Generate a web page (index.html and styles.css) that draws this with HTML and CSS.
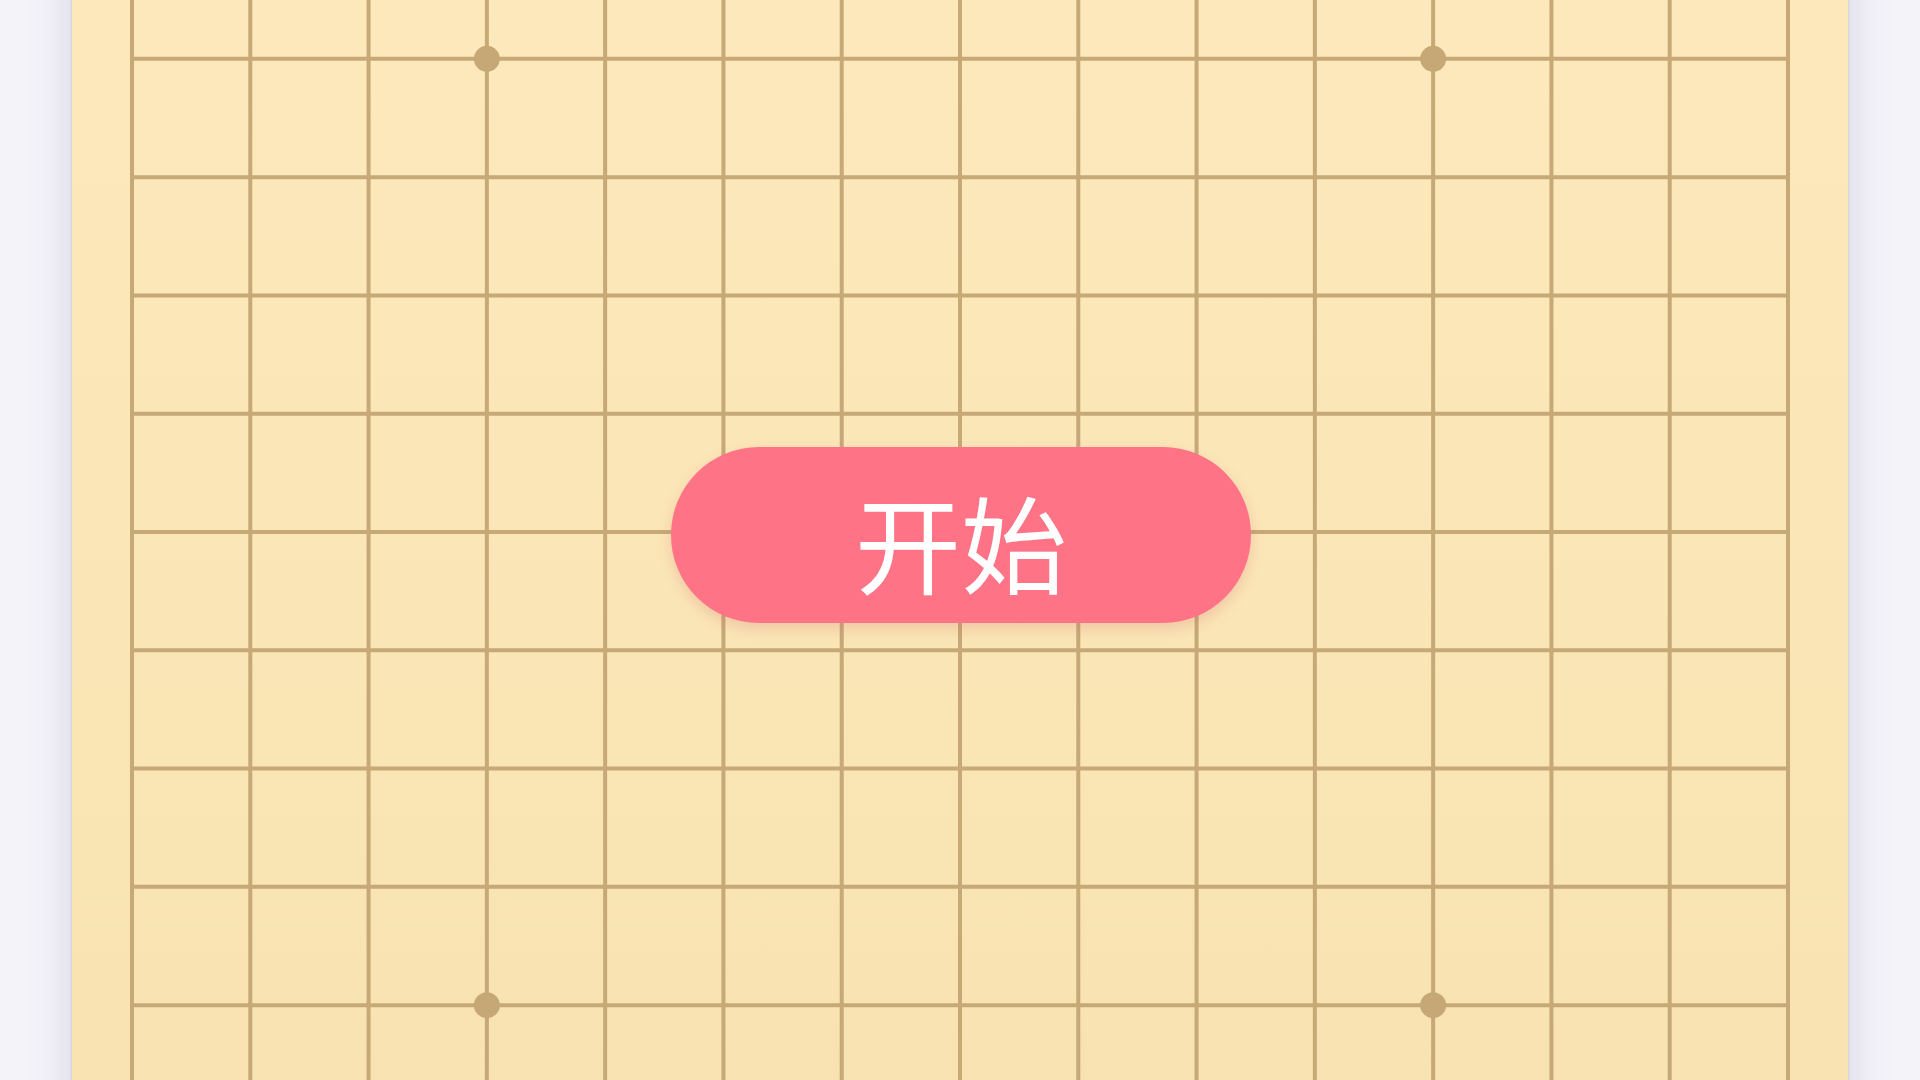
FILE: index.html
```html
<!DOCTYPE html>
<html lang="zh-CN">
<head>
<meta charset="utf-8">
<title>五子棋</title>
<link rel="stylesheet" href="styles.css">
</head>
<body>
<main class="stage">
  <section class="board">
    <svg class="grid" viewBox="0 0 1776 1776" xmlns="http://www.w3.org/2000/svg">
      <g class="lines" stroke="#c6a977" stroke-width="4" fill="none">
        <line x1="60" y1="60" x2="1716" y2="60"/>
        <line x1="60" y1="178.29" x2="1716" y2="178.29"/>
        <line x1="60" y1="296.57" x2="1716" y2="296.57"/>
        <line x1="60" y1="414.86" x2="1716" y2="414.86"/>
        <line x1="60" y1="533.14" x2="1716" y2="533.14"/>
        <line x1="60" y1="651.43" x2="1716" y2="651.43"/>
        <line x1="60" y1="769.71" x2="1716" y2="769.71"/>
        <line x1="60" y1="888" x2="1716" y2="888"/>
        <line x1="60" y1="1006.29" x2="1716" y2="1006.29"/>
        <line x1="60" y1="1124.57" x2="1716" y2="1124.57"/>
        <line x1="60" y1="1242.86" x2="1716" y2="1242.86"/>
        <line x1="60" y1="1361.14" x2="1716" y2="1361.14"/>
        <line x1="60" y1="1479.43" x2="1716" y2="1479.43"/>
        <line x1="60" y1="1597.71" x2="1716" y2="1597.71"/>
        <line x1="60" y1="1716" x2="1716" y2="1716"/>
        <line y1="60" x1="60" y2="1716" x2="60"/>
        <line y1="60" x1="178.29" y2="1716" x2="178.29"/>
        <line y1="60" x1="296.57" y2="1716" x2="296.57"/>
        <line y1="60" x1="414.86" y2="1716" x2="414.86"/>
        <line y1="60" x1="533.14" y2="1716" x2="533.14"/>
        <line y1="60" x1="651.43" y2="1716" x2="651.43"/>
        <line y1="60" x1="769.71" y2="1716" x2="769.71"/>
        <line y1="60" x1="888" y2="1716" x2="888"/>
        <line y1="60" x1="1006.29" y2="1716" x2="1006.29"/>
        <line y1="60" x1="1124.57" y2="1716" x2="1124.57"/>
        <line y1="60" x1="1242.86" y2="1716" x2="1242.86"/>
        <line y1="60" x1="1361.14" y2="1716" x2="1361.14"/>
        <line y1="60" x1="1479.43" y2="1716" x2="1479.43"/>
        <line y1="60" x1="1597.71" y2="1716" x2="1597.71"/>
        <line y1="60" x1="1716" y2="1716" x2="1716"/>
      </g>
      <g class="stars" fill="#c6a776">
        <circle cx="414.86" cy="414.86" r="13"/>
        <circle cx="1361.14" cy="414.86" r="13"/>
        <circle cx="888" cy="888" r="13"/>
        <circle cx="414.86" cy="1361.14" r="13"/>
        <circle cx="1361.14" cy="1361.14" r="13"/>
      </g>
    </svg>
    <button class="start" type="button">开始</button>
  </section>
</main>
</body>
</html>
```

FILE: styles.css
```css
html, body {
  margin: 0;
  padding: 0;
  height: 100%;
}

body {
  background: #f4f3fa;
  overflow: hidden;
  font-family: "Noto Sans CJK SC", "Noto Sans", sans-serif;
}

.stage {
  height: 100vh;
  display: flex;
  align-items: center;
  justify-content: center;
  overflow: hidden;
}

.board {
  flex: 0 0 auto;
  width: 1776px;
  height: 1776px;
  margin-top: -16px;
  display: grid;
  place-items: center;
  background: linear-gradient(180deg, #fdeabd 0%, #fbe6b7 50%, #f6e0ae 100%);
  box-shadow: 0 0 2px rgba(160, 130, 80, 0.4), 0 0 40px rgba(100, 100, 140, 0.22);
}

.grid {
  grid-area: 1 / 1;
  width: 1776px;
  height: 1776px;
  display: block;
}

.start {
  grid-area: 1 / 1;
  width: 580px;
  height: 176px;
  margin: 6px 0 0 2px;
  border: none;
  border-radius: 88px;
  background: #ff7386;
  color: #ffffff;
  font-family: "Noto Sans CJK SC", "Noto Sans", sans-serif;
  font-size: 106px;
  font-weight: 400;
  line-height: 1;
  letter-spacing: 0;
  padding: 10px 0 0 0;
  box-shadow: 0 6px 14px rgba(210, 90, 100, 0.22);
  cursor: pointer;
}
```
